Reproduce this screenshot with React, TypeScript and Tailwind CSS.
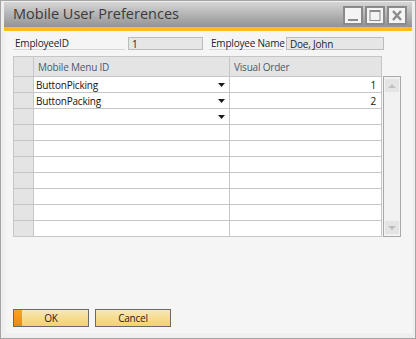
const FONT = { fontFamily: '"Open Sans", "Liberation Sans", sans-serif' };

const rows = [
  { id: 'ButtonPicking', order: '1', arrow: true },
  { id: 'ButtonPacking', order: '2', arrow: true },
  { id: '', order: '', arrow: true },
  { id: '', order: '', arrow: false },
  { id: '', order: '', arrow: false },
  { id: '', order: '', arrow: false },
  { id: '', order: '', arrow: false },
  { id: '', order: '', arrow: false },
  { id: '', order: '', arrow: false },
  { id: '', order: '', arrow: false },
];

function TitleButton({ kind }: { kind: 'min' | 'max' | 'close' }) {
  return (
    <div className="w-[20px] h-[19px] border-2 border-[#8a8a8a] bg-[#f4f4f4] flex items-center justify-center">
      <svg width="14" height="13" viewBox="0 0 14 13">
        {kind === 'min' && <rect x="2" y="10" width="10" height="2" fill="#8a8a8a" />}
        {kind === 'max' && (
          <>
            <rect x="2" y="1.5" width="10" height="10" fill="none" stroke="#8a8a8a" strokeWidth="1" />
            <rect x="2" y="1" width="10" height="2" fill="#8a8a8a" />
          </>
        )}
        {kind === 'close' && (
          <path d="M3 2 L11 11 M11 2 L3 11" stroke="#8a8a8a" strokeWidth="2.4" />
        )}
      </svg>
    </div>
  );
}

function YellowButton({ label, primary }: { label: string; primary?: boolean }) {
  return (
    <div className="relative w-[76px] h-[18px] border border-[#6a6a6a] bg-gradient-to-b from-[#f8e7b6] to-[#f4d26a] flex items-center justify-center text-[10px] text-[#1c1c1c]">
      {primary && (
        <div className="absolute left-0 top-0 bottom-0 w-[8px] bg-gradient-to-b from-[#f3a52a] to-[#ea8a12]" />
      )}
      <span className="relative">{label}</span>
    </div>
  );
}

export default function App() {
  return (
    <div
      style={FONT}
      className="w-[416px] h-[339px] border border-[#a4a4a4] bg-[#efefef] px-[3px] pt-[1px] pb-[5px] flex flex-col"
    >
      <div className="h-[25px] shrink-0 bg-gradient-to-b from-[#d6d6d6] to-[#939393] flex items-center justify-between pl-[9px] pr-[5px]">
        <span className="text-[14.5px] text-[#3a3a3a] leading-none">Mobile User Preferences</span>
        <div className="flex gap-[2px] mt-[1px]">
          <TitleButton kind="min" />
          <TitleButton kind="max" />
          <TitleButton kind="close" />
        </div>
      </div>
      <div className="h-[4px] shrink-0 bg-[#fcbd1e]" />

      <div className="flex-1 bg-[#f5f5f5] border-l-2 border-[#f0f0f0] pl-[7px] pt-[6px] pb-[6px] flex flex-col tracking-[-0.2px]">
        <div className="flex items-end h-[13px] text-[10px] text-[#1e2232] leading-none whitespace-nowrap">
          <div className="w-[112px] h-[13px] border-b border-[#d6d6d6] pl-[2px] flex items-center">EmployeeID</div>
          <div className="ml-[3px] w-[75px] h-[13px] border border-[#bcbcbc] bg-[#e6e6e6] pl-[3px] flex items-center">1</div>
          <div className="ml-[6px] w-[74px] h-[13px] border-b border-[#d6d6d6] pl-[2px] flex items-center">Employee Name</div>
          <div className="ml-[3px] w-[98px] h-[13px] border border-[#bcbcbc] bg-[#e6e6e6] pl-[3px] flex items-center">Doe, John</div>
        </div>

        <div className="mt-[6px] flex text-[10px] leading-none">
          <div className="w-[369px] border-l border-t border-[#c6c6c6]">
            <div className="flex h-[20px] bg-[#e4e4e4] border-b border-[#c6c6c6] text-[#4d5872]">
              <div className="w-[20px] border-r border-[#c6c6c6]" />
              <div className="w-[196px] border-r border-[#c6c6c6] pl-[4px] flex items-center">Mobile Menu ID</div>
              <div className="flex-1 border-r border-[#c6c6c6] pl-[4px] flex items-center">Visual Order</div>
            </div>
            {rows.map((r, i) => (
              <div key={i} className="flex h-[16px] border-b border-[#c6c6c6] text-[#141414]">
                <div className="w-[20px] bg-[#e4e4e4] border-r border-[#c6c6c6]" />
                <div className="w-[196px] bg-white border-r border-[#c6c6c6] pl-[2px] pr-[4px] flex items-center justify-between">
                  <span>{r.id}</span>
                  {r.arrow && (
                    <svg width="7" height="4" viewBox="0 0 7 4">
                      <path d="M0 0 H7 L3.5 4 Z" fill="#1a1a1a" />
                    </svg>
                  )}
                </div>
                <div className="flex-1 bg-white border-r border-[#c6c6c6] pr-[5px] flex items-center justify-end">
                  {r.order}
                </div>
              </div>
            ))}
          </div>
          <div className="ml-[1px] mt-[20px] w-[18px] h-[161px] border border-[#a9a9a9] bg-[#f2f2f2] flex flex-col justify-between px-[1px] py-[2px]">
            <div className="h-[13px] bg-[#e4e4e4] flex items-center justify-center">
              <svg width="8" height="4" viewBox="0 0 8 4">
                <path d="M0 4 H8 L4 0 Z" fill="#c2c2c2" />
              </svg>
            </div>
            <div className="h-[13px] bg-[#e4e4e4] flex items-center justify-center">
              <svg width="8" height="4" viewBox="0 0 8 4">
                <path d="M0 0 H8 L4 4 Z" fill="#bdbdbd" />
              </svg>
            </div>
          </div>
        </div>

        <div className="mt-auto flex gap-[6px]">
          <YellowButton label="OK" primary />
          <YellowButton label="Cancel" />
        </div>
      </div>
    </div>
  );
}
